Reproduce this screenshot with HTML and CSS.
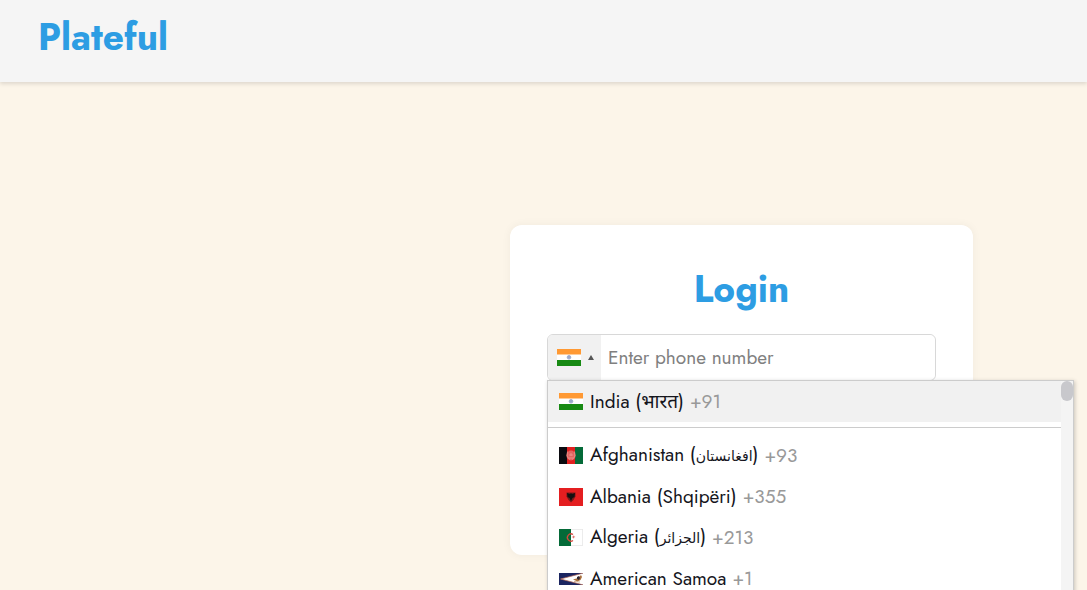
FILE: index.html
```html
<!DOCTYPE html>
<html lang="en">
<head>
  <meta charset="UTF-8" />
  <meta name="viewport" content="width=device-width, initial-scale=1.0"/>
  <title>Plateful</title>
  <link rel="stylesheet" href="styles.css">
</head>
<body>

  <header class="header">
    <a href="index.html" class="logo">Plateful</a>
  </header>

  <main class="main">
    <form class="login-card">
      <h1>Login</h1>

      <div class="phone-field">
        <button type="button" class="flag-btn" aria-label="Selected country: India" aria-expanded="true">
          <svg class="flag" viewBox="0 0 24 17" aria-hidden="true">
            <path fill="#fff" d="M0 0h24v17H0z"/>
            <path fill="#ff9933" d="M0 0h24v5.500H0z"/>
            <path fill="#188a14" d="M0 11h24v6H0z"/>
            <circle cx="12" cy="8.300" r="1.800" fill="#9aa8cc" stroke="#a4b0d0" stroke-width="1"/>
          </svg>
          <span class="arrow"></span>
        </button>
        <input type="tel" id="phone" aria-label="Phone number" placeholder="Enter phone number" />

        <div class="dropdown">
          <ul class="country-list" role="listbox" aria-label="Countries">
            <li class="country active" role="option" aria-selected="true">
              <svg class="flag" viewBox="0 0 24 17" aria-hidden="true">
                <path fill="#fff" d="M0 0h24v17H0z"/>
                <path fill="#ff9933" d="M0 0h24v5.500H0z"/>
                <path fill="#188a14" d="M0 11h24v6H0z"/>
                <circle cx="12" cy="8.300" r="1.800" fill="#9aa8cc" stroke="#a4b0d0" stroke-width="1"/>
              </svg>
              <span class="name">India (भारत)</span>
              <span class="code">+91</span>
            </li>
            <li class="divider" role="separator"></li>
            <li class="country" role="option">
              <svg class="flag" viewBox="0 0 24 17" aria-hidden="true">
                <path fill="#0b0b10" d="M0 0h8v17H0z"/>
                <path fill="#e02020" d="M8 0h8v17H8z"/>
                <path fill="#046a38" d="M16 0h8v17h-8z"/>
                <ellipse cx="12" cy="8.500" rx="4.500" ry="5" fill="#e36460"/>
                <path d="M8.500 4.500q-2 5 2 8M15.500 4.500q2 5-2 8M10 8h4M10 11h4M12 6v3" fill="none" stroke="#efa09a" stroke-width=".7"/>
              </svg>
              <span class="name">Afghanistan (<span class="arabic" lang="fa">افغانستان</span>)</span>
              <span class="code">+93</span>
            </li>
            <li class="country" role="option">
              <svg class="flag" viewBox="0 0 24 18" aria-hidden="true">
                <path fill="#e41e20" d="M0 0h24v18H0z"/>
                <path fill="#7a1818" d="M7.500 4.500h9v4L14.500 12 12 14.500 9.500 12l-2-3.500z"/>
                <path fill="#141010" d="M8 5l3 1 1-1 1 1 3-1-.5 4-2 1-1.500 3-1.500-3-2-1z"/>
              </svg>
              <span class="name">Albania (Shqipëri)</span>
              <span class="code">+355</span>
            </li>
            <li class="country" role="option">
              <svg class="flag" viewBox="0 0 24 17" aria-hidden="true">
                <path fill="#fff" d="M0 0h24v17H0z"/>
                <path fill="#046a38" d="M0 0h12v17H0z"/>
                <path fill="none" stroke="#d5483e" stroke-width="1.300" d="M14 5.500a3.600 3.600 0 1 0 0 6"/>
                <path fill="#d5483e" d="M15 6l-.6 1.500-1.900.5 1.900.5.600 1.500.1-1.800 1.400-.3-1.400-.3z"/>
                <path fill="none" stroke="#ddd" stroke-width=".7" d="M12 .3h11.700v16.400H12"/>
              </svg>
              <span class="name">Algeria (<span class="arabic" lang="ar">الجزائر</span>)</span>
              <span class="code">+213</span>
            </li>
            <li class="country" role="option">
              <svg class="flag" viewBox="0 0 24 12" aria-hidden="true">
                <path fill="#1b2560" d="M0 0h24v12H0z"/>
                <path fill="#fff" stroke="#b96a55" stroke-width=".7" d="M24.500 0L1.500 6l23 6z"/>
                <path fill="#a86f3c" d="M14 6.500l5-1.500 3-3 1 2-1.500 3-3 1.500z"/>
                <path fill="#2e2430" d="M18 4l2-1 1 2-1 2-2-1z"/>
                <path stroke="#c8a078" stroke-width=".8" d="M15 8.500l6 .5"/>
              </svg>
              <span class="name">American Samoa</span>
              <span class="code">+1</span>
            </li>
          </ul>
          <div class="scroll-track"><div class="scroll-thumb"></div></div>
        </div>
      </div>
    </form>
  </main>

</body>
</html>
```
FILE: styles.css
```css
* {
  margin: 0;
  padding: 0;
  box-sizing: border-box;
}

body {
  font-family: 'Jost', 'Lato', 'Noto Sans', 'DejaVu Sans', sans-serif;
  background: #fcf5e9;
  height: 100vh;
  overflow: hidden;
}

.header {
  background: #f5f5f5;
  height: 82px;
  padding: 13px 38px;
  box-shadow: 0 2px 4px rgba(0, 0, 0, 0.12);
}

.logo {
  display: inline-block;
  color: #2d9de3;
  font-size: 37px;
  font-weight: 700;
  line-height: 48px;
  text-decoration: none;
}

.main {
  display: flex;
  justify-content: center;
  padding: 143px 0 32px 396px;
}

.login-card {
  width: 100%;
  max-width: 463px;
  min-height: 330px;
  padding: 40px 37px;
  background: #fff;
  border-radius: 12px;
  box-shadow: 0 0 10px rgba(0, 0, 0, 0.05);
}

h1 {
  color: #2d9de3;
  font-size: 37px;
  font-weight: 700;
  line-height: 48px;
  text-align: center;
  margin-bottom: 21px;
}

.phone-field {
  position: relative;
  display: flex;
  border: 1px solid #d8d8d8;
  border-radius: 6px;
  height: 47px;
}

.flag-btn {
  display: flex;
  align-items: center;
  gap: 7px;
  width: 53px;
  padding-left: 9px;
  background: #f1f1f1;
  border: none;
  border-radius: 5px 0 0 5px;
  cursor: pointer;
}

.flag {
  width: 24px;
  flex-shrink: 0;
}

.arrow {
  border-left: 3px solid transparent;
  border-right: 3px solid transparent;
  border-bottom: 5px solid #555;
}

input {
  flex: 1;
  min-width: 0;
  padding: 0 7px;
  border: none;
  border-radius: 0 6px 6px 0;
  font-family: inherit;
  font-size: 19px;
  outline: none;
}

input::placeholder {
  color: #808080;
}

.dropdown {
  position: absolute;
  top: 100%;
  left: -1px;
  width: 527px;
  height: 240px;
  display: flex;
  background: #fff;
  border: 1px solid #ccc;
  box-shadow: 1px 1px 4px rgba(0, 0, 0, 0.2);
}

.country-list {
  flex: 1;
  list-style: none;
  overflow: hidden;
}

.country {
  display: flex;
  align-items: center;
  height: 41px;
  padding: 0 11px;
  font-size: 19px;
  line-height: 24px;
  white-space: nowrap;
  color: #15151c;
}

.country.active {
  background: #f1f1f1;
}

.name {
  margin-left: 7px;
}

.arabic {
  font-family: 'DejaVu Sans', sans-serif;
  font-size: 14px;
}

.code {
  margin-left: 6px;
  color: #999;
}

.divider {
  height: 1px;
  margin: 5px 0 7px;
  background: #ccc;
}

.scroll-track {
  width: 12px;
  background: #f4f4f4;
}

.scroll-thumb {
  height: 20px;
  background: #c8c8cc;
  border-radius: 6px;
}

@media (max-width: 768px) {
  .main {
    padding: 80px 20px;
  }

  .dropdown {
    width: calc(100% + 2px);
  }
}
```
